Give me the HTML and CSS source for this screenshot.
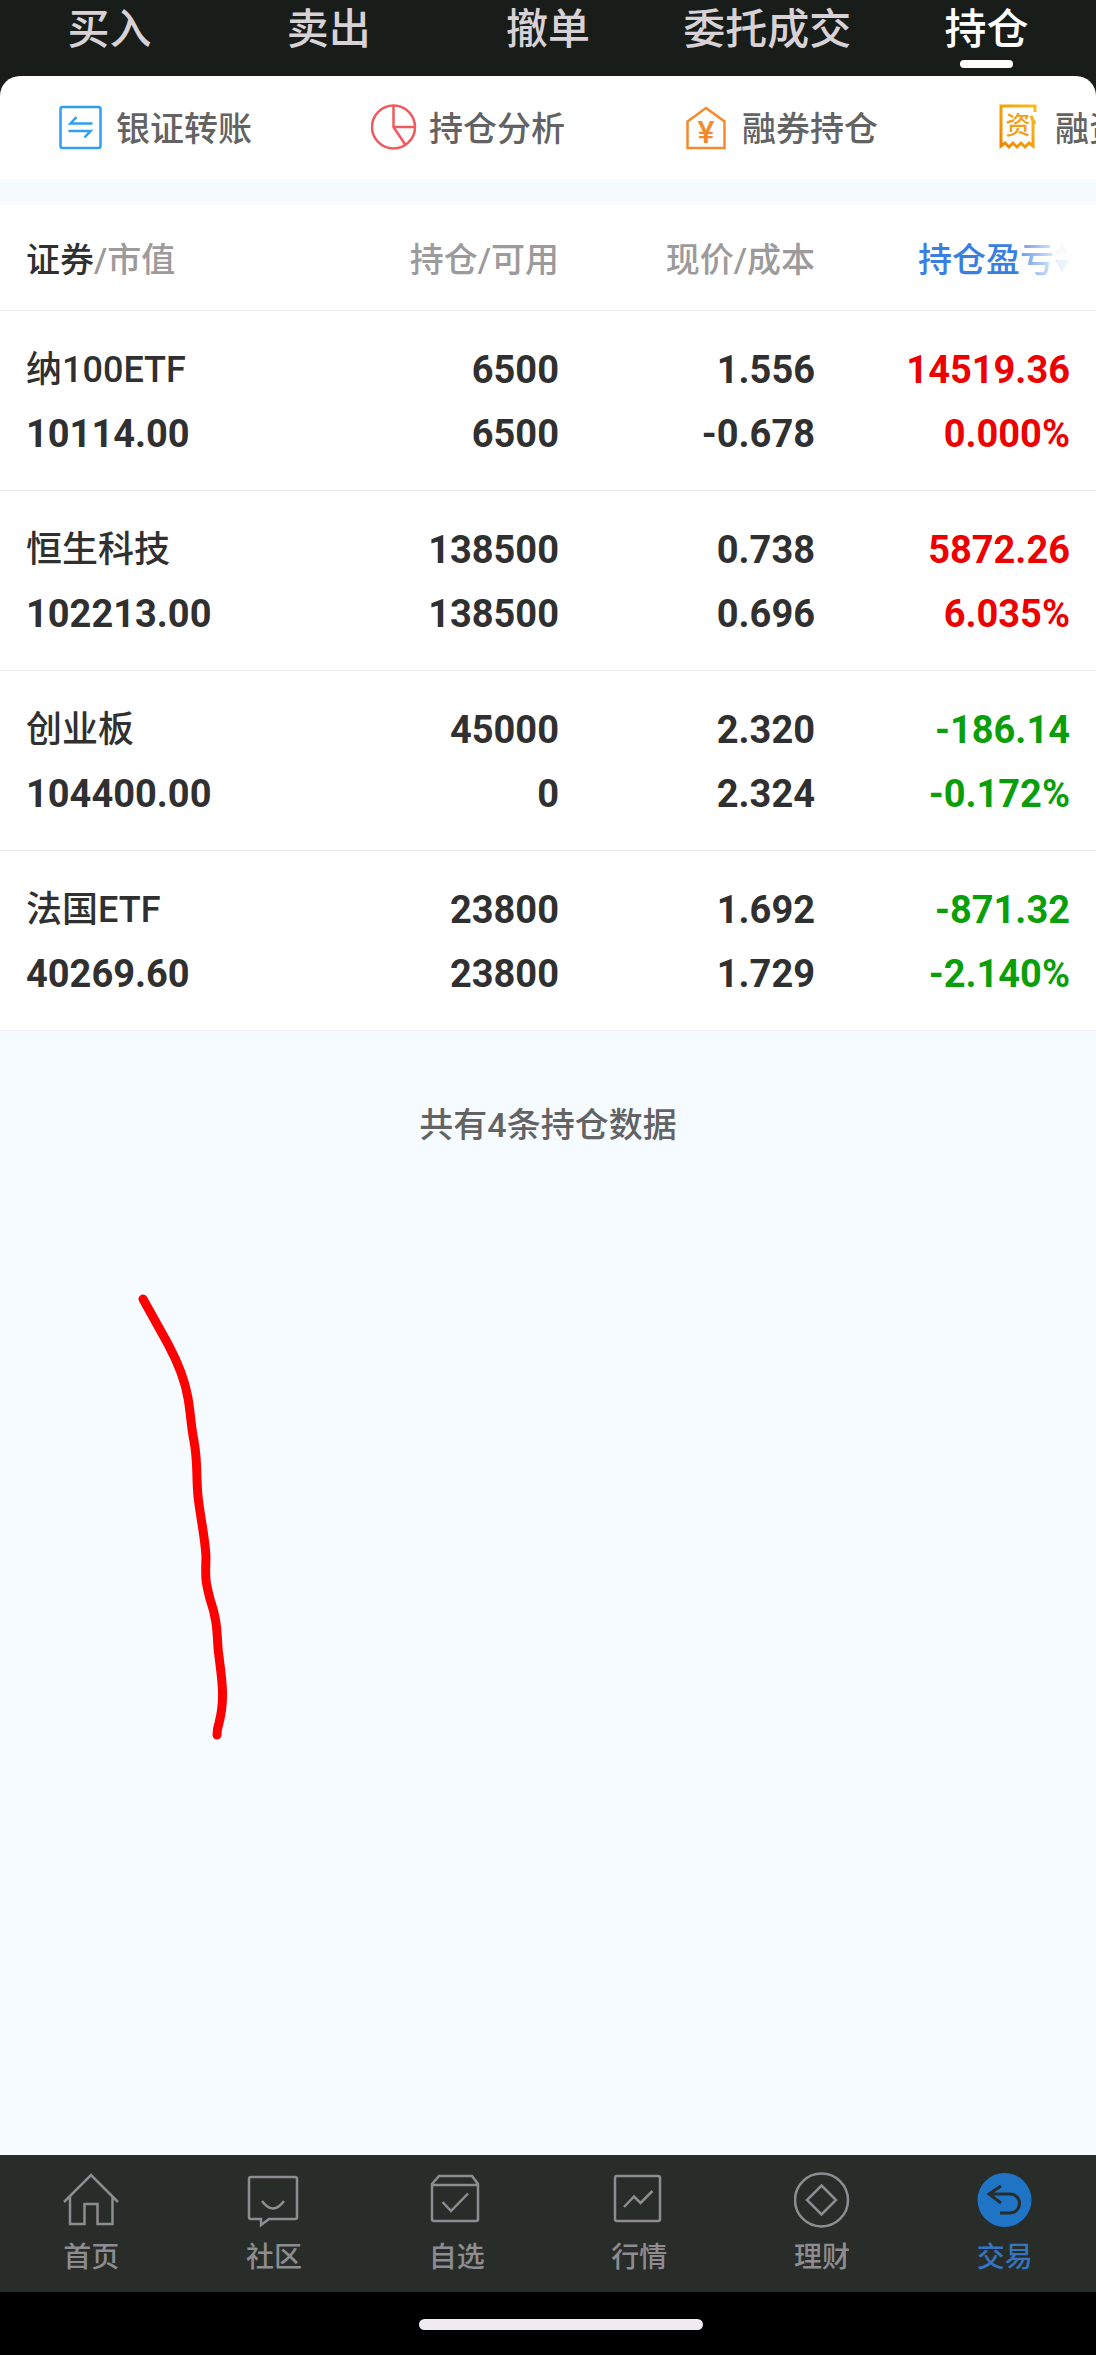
FILE: index.html
```html
<!DOCTYPE html>
<html lang="zh-CN">
<head>
  <meta charset="UTF-8" />
  <meta name="viewport" content="width=device-width, initial-scale=1.0" />
  <title>持仓</title>
  <link rel="stylesheet" href="styles.css">
</head>
<body>
  <header class="top">
    <nav class="tabs">
      <a href="#buy">买入</a>
      <a href="#sell">卖出</a>
      <a href="#cancel">撤单</a>
      <a href="#orders">委托成交</a>
      <a href="#positions" class="active">持仓</a>
    </nav>

    <div class="shortcuts">
      <a href="#transfer">
        <svg viewBox="0 0 46 46" fill="none" stroke="#2f9fee" stroke-width="2.5">
          <rect x="2.5" y="3" width="40" height="41" rx="2"/>
          <path d="M18.5 13l-6 6.500h22M10.500 27h22l-6 6.500"/>
        </svg>
        银证转账
      </a>
      <a href="#analysis">
        <svg viewBox="0 0 46 46" fill="none" stroke="#ef5a5f" stroke-width="2.5">
          <circle cx="22.5" cy="23" r="21.5"/>
          <path d="M22.5 1.500V23H44M22.500 23l12 18"/>
        </svg>
        持仓分析
      </a>
      <a href="#short">
        <svg viewBox="0 0 46 46" fill="none" stroke="#f48a2c" stroke-width="2.5">
          <path d="M3.5 17.500L22 4l18.500 13.500V44h-37z"/>
          <text class="yen" x="22" y="39" text-anchor="middle">¥</text>
        </svg>
        融券持仓
      </a>
      <a href="#margin">
        <svg viewBox="0 0 46 46" fill="none" stroke="url(#gold)" stroke-width="3">
          <defs>
            <linearGradient id="gold" x1="0" y1="1" x2="1" y2="0">
              <stop offset="0" stop-color="#ef8500"/>
              <stop offset="1" stop-color="#f8bd1a"/>
            </linearGradient>
          </defs>
          <path d="M38 8V2H4v40l4-3 4 4 4-4 4 4 4-4 4 4 4-4 4 3V17l-2-5 4 8"/>
          <text class="zi" x="21" y="30" text-anchor="middle">资</text>
        </svg>
        融资持仓
      </a>
    </div>
  </header>

  <main>
    <table class="positions">
      <thead>
        <tr>
          <th><b>证券</b>/市值</th>
          <th>持仓/可用</th>
          <th>现价/成本</th>
          <th>
            <button class="sort" type="button">持仓盈亏<svg viewBox="0 0 16 32"><path d="M8 1l7 12H1z" fill="#ccc"/><path d="M8 31l7-12H1z" fill="#3a7fe0"/></svg></button>
          </th>
        </tr>
      </thead>
      <tbody>
        <tr>
          <td><span class="name">纳100ETF</span><span>10114.00</span></td>
          <td><span>6500</span><span>6500</span></td>
          <td><span>1.556</span><span>-0.678</span></td>
          <td class="up"><span>14519.36</span><span>0.000%</span></td>
        </tr>
        <tr>
          <td><span class="name">恒生科技</span><span>102213.00</span></td>
          <td><span>138500</span><span>138500</span></td>
          <td><span>0.738</span><span>0.696</span></td>
          <td class="up"><span>5872.26</span><span>6.035%</span></td>
        </tr>
        <tr>
          <td><span class="name">创业板</span><span>104400.00</span></td>
          <td><span>45000</span><span>0</span></td>
          <td><span>2.320</span><span>2.324</span></td>
          <td class="down"><span>-186.14</span><span>-0.172%</span></td>
        </tr>
        <tr>
          <td><span class="name">法国ETF</span><span>40269.60</span></td>
          <td><span>23800</span><span>23800</span></td>
          <td><span>1.692</span><span>1.729</span></td>
          <td class="down"><span>-871.32</span><span>-2.140%</span></td>
        </tr>
      </tbody>
    </table>

    <p class="total">共有4条持仓数据</p>

    <svg class="stroke" viewBox="0 0 100 460">
      <path d="M8 8L33 53Q49 83 53 107C56 125 56 135 59 150C63 172 61 185 63 205C65 225 70 245 71 266C70 290 71 292 75 308C82 328 82 340 83 357C86 385 91 405 84 432Q82 438 82 444"/>
    </svg>
  </main>

  <footer>
    <nav class="bottom-nav">
      <a href="#home">
        <svg viewBox="0 0 56 56"><path d="M1 30L28 3l27 27M7 24v28h14.500V32H34.500v20H49.500V24"/></svg>
        首页
      </a>
      <a href="#community">
        <svg viewBox="0 0 56 56"><path d="M5 5h44q2 0 2 2v38q0 2-2 2H23l-8 6v-6H5q-2 0-2-2V7q0-2 2-2zM16 29q11 15 22 0"/></svg>
        社区
      </a>
      <a href="#watchlist">
        <svg viewBox="0 0 56 56"><path d="M3 12l7-8h33l6 8v35q0 2-2 2H5q-2 0-2-2zM3 13h46M13.500 30l8.500 9 17-17.500"/></svg>
        自选
      </a>
      <a href="#market">
        <svg viewBox="0 0 56 56"><rect x="4" y="4" width="45" height="45" rx="2"/><path d="M13 35l10-10.500 6.500 6.500 12-12"/></svg>
        行情
      </a>
      <a href="#wealth">
        <svg viewBox="0 0 56 56"><circle cx="27.5" cy="28" r="26.5"/><path d="M27.500 13.500L42 28 27.500 42.500 13 28z"/></svg>
        理财
      </a>
      <a href="#trade" class="active">
        <svg viewBox="0 0 56 56"><circle class="disc" cx="27.5" cy="28" r="27"/><path d="M24 14L12 22l12 9M12 22h21a9.500 9.500 0 0 1 0 19H23"/></svg>
        交易
      </a>
    </nav>
    <div class="gesture"><span></span></div>
  </footer>
</body>
</html>
```
FILE: styles.css
```css
* {
  box-sizing: border-box;
}
body {
  margin: 0;
  min-height: 100vh;
  display: flex;
  flex-direction: column;
  overflow-x: hidden;
  background: #f6fbff;
  color: #303030;
  font-family: Roboto, "Noto Sans CJK SC", sans-serif;
  font-size: 34px;
  font-weight: 500;
}
a {
  color: inherit;
  text-decoration: none;
}

/* top tabs */
.top {
  background: #191d1a;
}
.tabs {
  display: flex;
  height: 76px;
}
.tabs a {
  flex: 1 1 0;
  display: flex;
  flex-direction: column;
  align-items: center;
  color: #d8d2d6;
  font-size: 42px;
  line-height: 60px;
  white-space: nowrap;
}
.tabs .active {
  color: #fff;
}
.tabs .active::after {
  content: "";
  width: 53px;
  height: 8px;
  border-radius: 4px;
  background: #fff;
}

.shortcuts {
  display: flex;
  height: 103px;
  padding-bottom: 2px;
  overflow: hidden;
  background: #fff;
  border-radius: 20px 20px 0 0;
  color: #636363;
}
.shortcuts a {
  flex: 0 0 313px;
  display: flex;
  align-items: center;
  gap: 12px;
  padding-left: 58px;
  white-space: nowrap;
}
.shortcuts svg {
  width: 46px;
  height: 46px;
}
.yen,
.zi {
  stroke: none;
  fill: #f48a2c;
  font-size: 32px;
}
.zi {
  fill: #f0a010;
  font-size: 25px;
}

/* positions */
main {
  flex: 1;
  padding-top: 26px;
}
.positions {
  width: 100%;
  table-layout: fixed;
  border-collapse: collapse;
  background: #fff;
}
.positions th,
.positions td {
  padding: 0;
  text-align: right;
  border-bottom: 1px solid #ececec;
}
.positions th {
  height: 105px;
  color: #9c9a9b;
  font-weight: 500;
  white-space: nowrap;
}
.positions th b {
  color: #303030;
  font-weight: 500;
}
.positions th:first-child,
.positions td:first-child {
  width: 28%;
  padding-left: 26px;
  text-align: left;
}
.positions th:nth-child(2) {
  width: 23%;
}
.positions th:last-child,
.positions td:last-child {
  width: 281px;
  padding-right: 26px;
}
.positions td {
  padding-top: 27px;
  padding-bottom: 24px;
  font-size: 38px;
  font-weight: 700;
  line-height: 64px;
}
.positions td span {
  display: block;
}
.positions .name {
  height: 64px;
  font-size: 36px;
  font-weight: 500;
}
.positions .up {
  color: #ec0000;
}
.positions .down {
  color: #0a9f0a;
}
.sort {
  position: relative;
  display: inline-flex;
  align-items: center;
  padding: 0;
  border: 0;
  background: none;
  color: #3a7fe0;
  font: inherit;
}
.sort svg {
  width: 16px;
  height: 32px;
}
.sort::after {
  content: "";
  position: absolute;
  top: 0;
  right: 0;
  width: 52px;
  height: 100%;
  background: linear-gradient(to right, rgba(255,255,255,0.2), rgba(255,255,255,0.9) 80%);
}

.total {
  margin: 69px 0 0;
  color: #636363;
  line-height: 50px;
  text-align: center;
}
.stroke {
  display: block;
  width: 100px;
  height: 460px;
  margin: 141px 0 0 135px;
  fill: none;
  stroke: #f00;
  stroke-width: 9;
  stroke-linecap: round;
}

/* bottom navigation */
.bottom-nav {
  display: flex;
  height: 137px;
  padding-top: 17px;
  background: #292d2a;
  color: #8d8c91;
  font-size: 28px;
  line-height: 36px;
}
.bottom-nav a {
  flex: 1 1 0;
  display: flex;
  flex-direction: column;
  align-items: center;
  gap: 12px;
}
.bottom-nav svg {
  width: 56px;
  height: 56px;
  fill: none;
  stroke: #8d8c91;
  stroke-width: 2.5;
}
.bottom-nav .active {
  color: #3474c0;
}
.bottom-nav .active svg {
  stroke: #292d2a;
  stroke-width: 3;
}
.bottom-nav .disc {
  fill: #1f74c6;
  stroke: none;
}
.gesture {
  display: flex;
  justify-content: center;
  height: 63px;
  padding: 27px 0 0 26px;
  background: #000;
}
.gesture span {
  width: 284px;
  height: 11px;
  border-radius: 6px;
  background: #efebee;
}
```
